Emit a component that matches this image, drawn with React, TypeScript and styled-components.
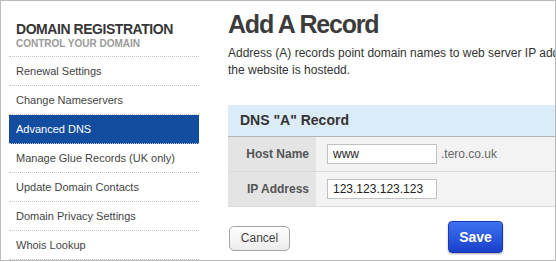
import React from "react";
import styled, { createGlobalStyle } from "styled-components";

const GlobalStyle = createGlobalStyle`
  body {
    margin: 0;
    background: #fff;
    font-family: "Liberation Sans", Arial, sans-serif;
  }
`;

const Frame = styled.div`
  box-sizing: border-box;
  width: 556px;
  height: 261px;
  border: 1px solid #bcbcbc;
  display: flex;
  overflow: hidden;
`;

const Sidebar = styled.aside`
  flex: 0 0 190px;
  padding: 20px 0 0 8px;
`;

const SideHeader = styled.div`
  padding: 0 0 7px 7px;
`;

const SideTitle = styled.h2`
  margin: 0;
  font-size: 14px;
  line-height: 17px;
  letter-spacing: -0.45px;
  font-weight: bold;
  color: #363636;
`;

const SideSubtitle = styled.div`
  font-size: 10px;
  line-height: 11px;
  font-weight: bold;
  color: #9a9a9a;
`;

const Menu = styled.ul`
  list-style: none;
  margin: 0;
  padding: 0;
  border-top: 1px dotted #c4c4c4;
`;

const MenuItem = styled.li<{ $active?: boolean }>`
  height: 28px;
  line-height: 28px;
  padding-left: 7px;
  font-size: 11px;
  color: ${(p) => (p.$active ? "#fff" : "#444")};
  background: ${(p) => (p.$active ? "#124d9f" : "transparent")};
  border-bottom: 1px dotted #c4c4c4;
  white-space: nowrap;
`;

const Main = styled.main`
  flex: 0 0 400px;
  padding: 8px 0 0 29px;
`;

const Title = styled.h1`
  margin: 0 0 6px;
  font-size: 25px;
  line-height: 30px;
  letter-spacing: -1.2px;
  font-weight: bold;
  color: #3c3c3c;
`;

const Intro = styled.p`
  margin: 0;
  font-size: 12px;
  line-height: 17px;
  color: #333;
  white-space: nowrap;
`;

const Panel = styled.section`
  margin-top: 26px;
`;

const PanelHeader = styled.h3`
  margin: 0;
  height: 31px;
  line-height: 31px;
  padding-left: 12px;
  font-size: 14px;
  font-weight: bold;
  color: #333;
  background: #dcebf8;
  border-bottom: 1px solid #b4b4b4;
`;

const Row = styled.div`
  display: grid;
  grid-template-columns: 88px 1fr;
  height: 34px;
  border-bottom: 1px solid #dadada;
`;

const Label = styled.div`
  display: flex;
  align-items: center;
  justify-content: flex-end;
  padding-right: 7px;
  font-size: 12px;
  font-weight: bold;
  color: #555;
  background: #e4e4e4;
`;

const Value = styled.div`
  display: flex;
  align-items: center;
  gap: 4px;
  padding-left: 11px;
  background: #f3f3f3;
`;

const Input = styled.input`
  box-sizing: border-box;
  width: 110px;
  height: 20px;
  padding: 0 5px;
  border: 1px solid #c2c2c2;
  background: #fff;
  font-family: inherit;
  font-size: 12px;
  color: #222;
  outline: none;
`;

const Suffix = styled.span`
  font-size: 12px;
  color: #666;
`;

const Actions = styled.div`
  display: flex;
  align-items: center;
  gap: 158px;
  margin-top: 14px;
  padding-left: 1px;
`;

const CancelButton = styled.button`
  box-sizing: border-box;
  width: 61px;
  height: 25px;
  margin-top: 2px;
  border: 1px solid #a3a3a3;
  border-radius: 5px;
  background: linear-gradient(#ffffff, #ececec);
  font-family: inherit;
  font-size: 12px;
  color: #444;
`;

const SaveButton = styled.button`
  box-sizing: border-box;
  width: 55px;
  height: 32px;
  border: 1px solid #1637ad;
  border-radius: 4px;
  background: linear-gradient(#3d72f0, #1a3fcb);
  box-shadow: 0 1px 2px rgba(0, 0, 0, 0.35);
  font-family: inherit;
  font-size: 14px;
  font-weight: bold;
  color: #fff;
`;

const menu = [
  "Renewal Settings",
  "Change Nameservers",
  "Advanced DNS",
  "Manage Glue Records (UK only)",
  "Update Domain Contacts",
  "Domain Privacy Settings",
  "Whois Lookup",
];

export default function App() {
  return (
    <>
      <GlobalStyle />
      <Frame>
        <Sidebar>
          <SideHeader>
            <SideTitle>DOMAIN REGISTRATION</SideTitle>
            <SideSubtitle>CONTROL YOUR DOMAIN</SideSubtitle>
          </SideHeader>
          <Menu>
            {menu.map((item) => (
              <MenuItem key={item} $active={item === "Advanced DNS"}>
                {item}
              </MenuItem>
            ))}
          </Menu>
        </Sidebar>
        <Main>
          <Title>Add A Record</Title>
          <Intro>
            Address (A) records point domain names to web server IP address where
            <br />
            the website is hostedd.
          </Intro>
          <Panel>
            <PanelHeader>DNS "A" Record</PanelHeader>
            <Row>
              <Label>Host Name</Label>
              <Value>
                <Input defaultValue="www" />
                <Suffix>.tero.co.uk</Suffix>
              </Value>
            </Row>
            <Row>
              <Label>IP Address</Label>
              <Value>
                <Input defaultValue="123.123.123.123" />
              </Value>
            </Row>
          </Panel>
          <Actions>
            <CancelButton>Cancel</CancelButton>
            <SaveButton>Save</SaveButton>
          </Actions>
        </Main>
      </Frame>
    </>
  );
}
